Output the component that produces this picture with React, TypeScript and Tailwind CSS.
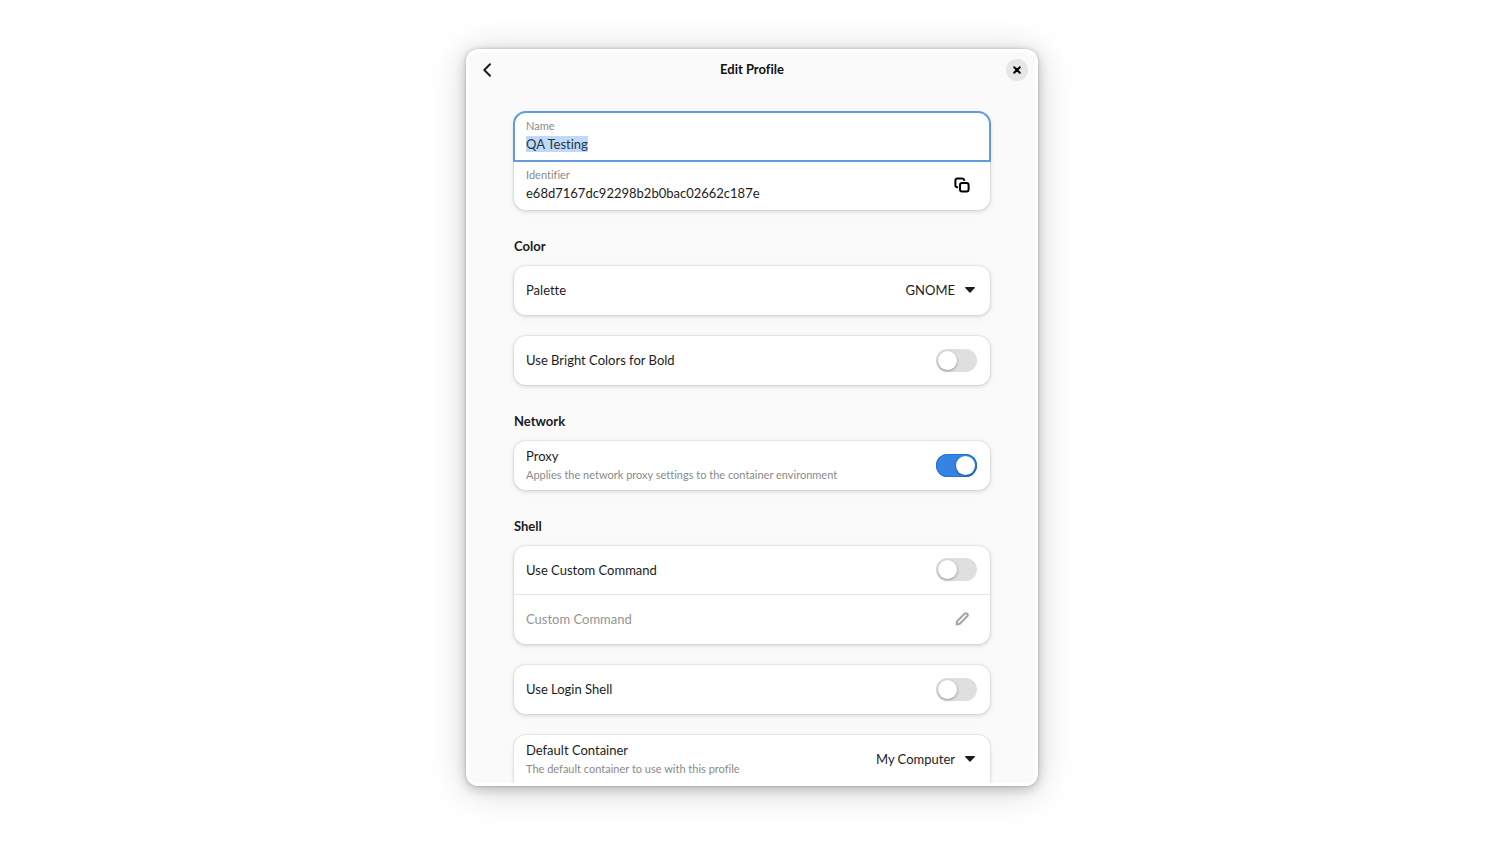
import { useEffect, useRef } from "react";
import type { ReactNode } from "react";

function Card({ children }: { children: ReactNode }) {
  return (
    <div className="divide-y divide-[#e6e6e6] rounded-xl bg-white shadow-[0_0_0_1px_rgba(0,0,0,0.04),0_1px_3px_1px_rgba(0,0,0,0.09),0_2px_6px_2px_rgba(0,0,0,0.03)]">
      {children}
    </div>
  );
}

function Row({ children }: { children: ReactNode }) {
  return <div className="flex h-[49px] items-center justify-between pr-[13px] pb-px pl-3">{children}</div>;
}

function Section({ title, children }: { title: string; children: ReactNode }) {
  return (
    <section className="flex flex-col">
      <h2 className="pt-[26px] pb-[10px] font-bold leading-5">{title}</h2>
      <div className="flex flex-col gap-[21px]">{children}</div>
    </section>
  );
}

function Title({ id, title, subtitle }: { id: string; title: string; subtitle?: string }) {
  return (
    <label htmlFor={id} className="flex flex-col">
      <span className="leading-5">{title}</span>
      {subtitle && <span className="text-[11px] leading-[18px] text-[#8a8a8a]">{subtitle}</span>}
    </label>
  );
}

function SwitchRow({ id, title, subtitle, on = false }: { id: string; title: string; subtitle?: string; on?: boolean }) {
  return (
    <Row>
      <Title id={id} title={title} subtitle={subtitle} />
      <input
        id={id}
        type="checkbox"
        role="switch"
        defaultChecked={on}
        className="flex h-[23px] w-[41px] shrink-0 appearance-none items-center rounded-full bg-[#dfdfdf] px-0.5 before:size-[19px] before:rounded-full before:bg-white before:shadow-[0_1px_3px_rgba(0,0,0,0.35)] checked:justify-end checked:bg-[#3584e4] checked:shadow-[inset_0_0_0_1px_#1f74e0]"
      />
    </Row>
  );
}

function SelectRow({ id, title, subtitle, value }: { id: string; title: string; subtitle?: string; value: string }) {
  return (
    <Row>
      <Title id={id} title={title} subtitle={subtitle} />
      <div className="relative flex items-center">
        <select id={id} className="appearance-none bg-transparent pr-[22px] leading-5 outline-none [text-align-last:right]">
          <option>{value}</option>
        </select>
        <svg viewBox="0 0 10 6" className="pointer-events-none absolute right-0.5 h-1.5 w-2.5" fill="currentColor" aria-hidden="true">
          <path d="M.6 0h8.8c.5 0 .7.5.4.9L5.5 5.6a.7.7 0 0 1-1 0L.2.9C-.1.5.1 0 .6 0z" />
        </svg>
      </div>
    </Row>
  );
}

export default function App() {
  const nameRef = useRef<HTMLInputElement>(null);

  useEffect(() => {
    nameRef.current?.focus();
    nameRef.current?.select();
  }, []);

  return (
    <div className="flex h-screen flex-col items-center bg-white pt-[49px] pb-[60px] font-[Lato,'Noto_Sans',sans-serif] text-[13px] text-[#1c1c1e] [font-variant-ligatures:none]">
      <main className="flex min-h-0 w-full max-w-[572px] flex-1 flex-col overflow-hidden rounded-xl border-[3px] border-white bg-[#fafafa] shadow-[0_0_3px_rgba(0,0,0,0.2),0_3px_12px_rgba(0,0,0,0.2),0_4px_36px_rgba(0,0,0,0.18)]">
        <header className="flex h-9 shrink-0 items-center justify-between px-[7px]">
          <button aria-label="Back" className="flex size-[22px] items-center justify-center">
            <svg viewBox="0 0 16 16" className="size-4" fill="none" stroke="currentColor" strokeWidth="2" strokeLinecap="round" strokeLinejoin="round">
              <path d="M11 2.300 5.300 8l5.700 5.700" />
            </svg>
          </button>
          <h1 className="font-bold text-[#111]">Edit Profile</h1>
          <button aria-label="Close" className="flex size-[22px] items-center justify-center rounded-full bg-[#e6e6e6] text-black">
            <svg viewBox="0 0 8 8" className="size-2" fill="none" stroke="currentColor" strokeWidth="2" strokeLinecap="round">
              <path d="M1.2 1.2l5.6 5.6M6.8 1.2 1.2 6.8" />
            </svg>
          </button>
        </header>

        <div className="min-h-0 flex-1 overflow-y-auto px-[45px] pt-6 [scrollbar-width:none]">
          <Card>
            <div className="flex h-[49px] flex-col justify-center rounded-t-xl pr-[13px] pl-3 outline-2 -outline-offset-1 outline-[#629bdb]">
              <label htmlFor="name" className="text-[11px] leading-4 text-[#8a8a8a]">Name</label>
              <input
                id="name"
                ref={nameRef}
                defaultValue="QA Testing"
                className="h-5 w-full bg-transparent leading-[18px] outline-none selection:bg-[#c0d9f6] selection:text-[#26384f]"
              />
            </div>
            <Row>
              <div className="flex flex-col">
                <span className="text-[11px] leading-4 text-[#8a8a8a]">Identifier</span>
                <span className="leading-5">e68d7167dc92298b2b0bac02662c187e</span>
              </div>
              <button aria-label="Copy identifier" className="flex size-[30px] items-center justify-center text-black">
                <svg viewBox="0 0 16 16" className="size-4" fill="none" stroke="currentColor" strokeWidth="2" strokeLinecap="round" strokeLinejoin="round">
                  <rect x="6" y="6" width="8.6" height="8.4" rx="2" />
                  <path d="M3.2 10.2A2 2 0 0 1 1.4 8.200V3.400a2 2 0 0 1 2-2h4.800a2 2 0 0 1 2 1.700" />
                </svg>
              </button>
            </Row>
          </Card>

          <Section title="Color">
            <Card>
              <SelectRow id="palette" title="Palette" value="GNOME" />
            </Card>
            <Card>
              <SwitchRow id="bright" title="Use Bright Colors for Bold" />
            </Card>
          </Section>

          <Section title="Network">
            <Card>
              <SwitchRow id="proxy" title="Proxy" subtitle="Applies the network proxy settings to the container environment" on />
            </Card>
          </Section>

          <Section title="Shell">
            <Card>
              <SwitchRow id="custom" title="Use Custom Command" />
              <Row>
                <input
                  aria-label="Custom Command"
                  placeholder="Custom Command"
                  disabled
                  className="min-w-0 flex-1 bg-transparent leading-5 placeholder:text-[#949494]"
                />
                <button aria-label="Edit custom command" disabled className="flex size-[30px] items-center justify-center text-[#a4a4a4]">
                  <svg viewBox="0 0 16 16" className="size-4" fill="none" stroke="currentColor" strokeWidth="2" strokeLinejoin="round">
                    <path d="M2.600 13.400l.5-3.200 7.500-7.500a1.700 1.700 0 0 1 2.600 2.600l-7.400 7.500z" />
                  </svg>
                </button>
              </Row>
            </Card>
            <Card>
              <SwitchRow id="login" title="Use Login Shell" />
            </Card>
            <div className="rounded-t-xl border-b border-[#e6e6e6] bg-white shadow-[0_0_0_1px_rgba(0,0,0,0.04),0_1px_3px_1px_rgba(0,0,0,0.09)]">
              <SelectRow id="container" title="Default Container" subtitle="The default container to use with this profile" value="My Computer" />
            </div>
          </Section>
        </div>
      </main>
    </div>
  );
}
